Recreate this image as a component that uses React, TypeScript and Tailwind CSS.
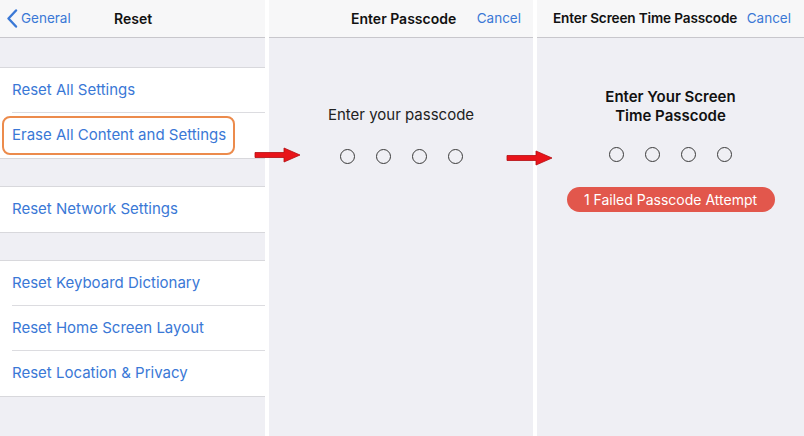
const font = { fontFamily: 'Inter, "Noto Sans", sans-serif' }

function NavBar({ children }: { children: React.ReactNode }) {
  return (
    <div className="relative flex h-[38px] shrink-0 items-center border-b border-[#c8c7cc] bg-[#f7f7f8]">
      {children}
    </div>
  )
}

function Row({ label, last, highlight }: { label: string; last?: boolean; highlight?: boolean }) {
  return (
    <div className="relative flex h-[45px] items-center pl-3">
      {highlight && (
        <span className="absolute top-[3px] bottom-[3px] left-[2px] w-[233px] rounded-[8px] border-2 border-[#ec8b4c]" />
      )}
      <span className="text-[15px] text-[#3a78d6]">{label}</span>
      {!last && <span className="absolute right-0 bottom-0 left-3 h-px bg-[#dcdce0]" />}
    </div>
  )
}

function Group({ rows, highlightIndex }: { rows: string[]; highlightIndex?: number }) {
  return (
    <div className="border-y border-[#d8d8dc] bg-white">
      {rows.map((r, i) => (
        <Row key={r} label={r} last={i === rows.length - 1} highlight={i === highlightIndex} />
      ))}
    </div>
  )
}

function Dots() {
  return (
    <div className="flex justify-center gap-[21px]">
      {[0, 1, 2, 3].map((i) => (
        <span key={i} className="h-[15px] w-[15px] rounded-full border border-[#3a3a3a]" />
      ))}
    </div>
  )
}

function Arrow({ className }: { className: string }) {
  return (
    <svg className={className} width="48" height="16" viewBox="0 0 48 16">
      <path d="M1 5.5 H30 V1 L46 8 L30 15 V10.5 H1 Z" fill="#e8141a" stroke="#b40c10" strokeWidth="0.8" />
    </svg>
  )
}

export default function App() {
  return (
    <div className="relative flex h-[436px] w-[804px] overflow-hidden bg-white" style={font}>
      <section className="flex w-[265px] shrink-0 flex-col bg-[#efeff4]">
        <NavBar>
          <div className="flex items-center pl-[6px] text-[13.5px] text-[#3a78d6]">
            <svg width="12" height="19" viewBox="0 0 12 19" className="shrink-0">
              <polyline points="10,1.5 2.5,9.5 10,17.5" fill="none" stroke="#3a78d6" strokeWidth="2.4" strokeLinecap="round" strokeLinejoin="round" />
            </svg>
            <span className="ml-[3px]">General</span>
          </div>
          <span className="absolute left-[114px] text-[14px] font-semibold text-[#111]">Reset</span>
        </NavBar>
        <div className="h-[29px]" />
        <Group rows={['Reset All Settings', 'Erase All Content and Settings']} highlightIndex={1} />
        <div className="h-[27px]" />
        <Group rows={['Reset Network Settings']} />
        <div className="h-[27px]" />
        <Group rows={['Reset Keyboard Dictionary', 'Reset Home Screen Layout', 'Reset Location & Privacy']} />
      </section>

      <div className="w-[4px] shrink-0 bg-white" />

      <section className="flex w-[264px] shrink-0 flex-col bg-[#efeff4]">
        <NavBar>
          <span className="absolute left-[82px] text-[14px] font-semibold text-[#111]">Enter Passcode</span>
          <span className="absolute right-[12px] text-[13.5px] text-[#3a78d6]">Cancel</span>
        </NavBar>
        <div className="flex flex-col items-center pt-[66px]">
          <p className="text-[15px] text-[#222]">Enter your passcode</p>
          <div className="mt-[22px]">
            <Dots />
          </div>
        </div>
      </section>

      <div className="w-[4px] shrink-0 bg-white" />

      <section className="flex flex-1 flex-col bg-[#efeff4]">
        <NavBar>
          <span className="absolute left-[16px] text-[13.6px] tracking-[-0.15px] font-semibold text-[#111]">Enter Screen Time Passcode</span>
          <span className="absolute right-[13px] text-[13.5px] text-[#3a78d6]">Cancel</span>
        </NavBar>
        <div className="flex flex-col items-center pt-[49px]">
          <p className="text-center text-[15px] leading-[19px] font-semibold text-[#111]">
            Enter Your Screen
            <br />
            Time Passcode
          </p>
          <div className="mt-[22px]">
            <Dots />
          </div>
          <div className="mt-[25px] flex h-[25px] w-[208px] items-center justify-center rounded-full bg-[#e2574c] text-[14px] text-white">
            1 Failed Passcode Attempt
          </div>
        </div>
      </section>

      <Arrow className="absolute top-[147px] left-[254px]" />
      <Arrow className="absolute top-[150px] left-[506px]" />
    </div>
  )
}
